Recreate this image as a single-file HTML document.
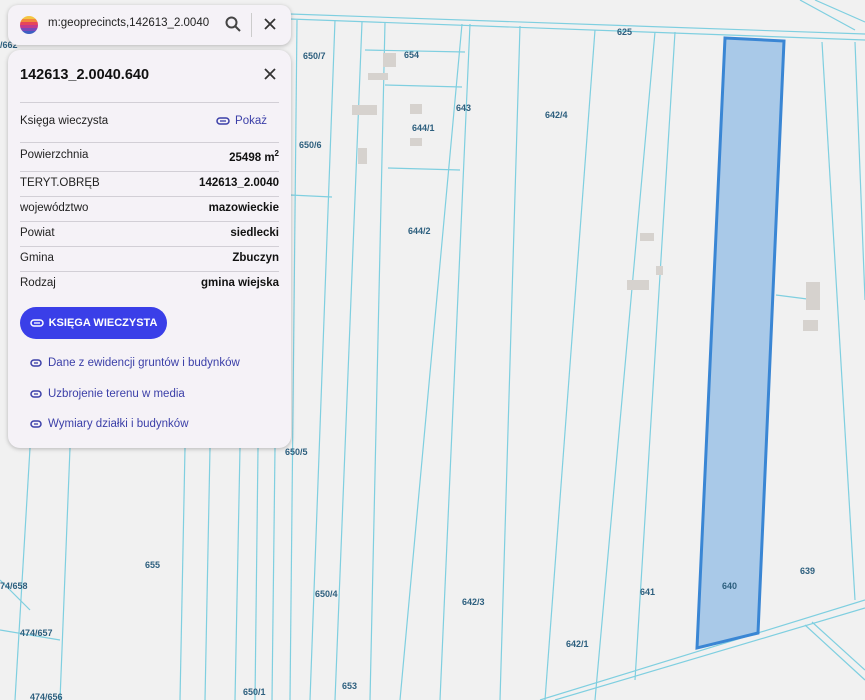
<!DOCTYPE html>
<html><head><meta charset="utf-8"><style>
body{margin:0;width:865px;height:700px;overflow:hidden;background:#f1f1f1;font-family:"Liberation Sans",sans-serif;position:relative}
svg.map{position:absolute;left:0;top:0}
.lbl{font-family:"Liberation Sans",sans-serif;font-size:9px;fill:#2d5f7e;font-weight:bold}
.card{position:absolute;background:#f5f2f7;border-radius:12px;box-shadow:0 1px 4px rgba(0,0,0,.25)}
.row{position:absolute;left:20px;width:259px;display:flex;justify-content:space-between;font-size:11.5px;color:#222}
.row b{color:#111}
.hr{position:absolute;left:20px;width:259px;height:1px;background:#d2cfd6}
.lnk{position:absolute;left:30px;font-size:11.5px;color:#3b3fa8;display:flex;align-items:center;gap:6px}
</style></head><body>
<svg class="map" width="865" height="700">
<g stroke="#7fcfe0" stroke-width="1.2" fill="none">
<line x1="290" y1="14" x2="865" y2="34"/><line x1="290" y1="19" x2="865" y2="40"/>
<line x1="800" y1="0" x2="855" y2="30"/><line x1="815" y1="0" x2="865" y2="22"/>
<line x1="297" y1="20" x2="290" y2="700"/>
<line x1="335" y1="20" x2="310" y2="700"/>
<line x1="362" y1="22" x2="335" y2="700"/>
<line x1="385" y1="22" x2="370" y2="700"/>
<line x1="462" y1="24" x2="400" y2="700"/>
<line x1="470" y1="24" x2="440" y2="700"/>
<line x1="520" y1="26" x2="500" y2="700"/>
<line x1="595" y1="30" x2="545" y2="700"/>
<line x1="655" y1="32" x2="595" y2="700"/>
<line x1="675" y1="32" x2="635" y2="680"/>
<line x1="822" y1="42" x2="855" y2="600"/>
<line x1="855" y1="42" x2="865" y2="300"/>
<line x1="70" y1="448" x2="60" y2="700"/><line x1="30" y1="448" x2="15" y2="700"/>
<line x1="185" y1="448" x2="180" y2="700"/><line x1="210" y1="448" x2="205" y2="700"/>
<line x1="240" y1="448" x2="235" y2="700"/><line x1="258" y1="448" x2="255" y2="700"/>
<line x1="275" y1="448" x2="272" y2="700"/>
<line x1="290" y1="195" x2="332" y2="197"/><line x1="388" y1="168" x2="460" y2="170"/>
<line x1="385" y1="85" x2="462" y2="87"/><line x1="365" y1="50" x2="465" y2="52"/>
<line x1="540" y1="700" x2="865" y2="600"/><line x1="555" y1="700" x2="865" y2="608"/>
<line x1="805" y1="625" x2="865" y2="680"/><line x1="812" y1="622" x2="865" y2="670"/>
<line x1="0" y1="580" x2="30" y2="610"/><line x1="0" y1="630" x2="60" y2="640"/>
<line x1="776" y1="295" x2="815" y2="300"/>
</g>
<g fill="#d6d2ce"><rect x="383" y="53" width="13" height="14"/><rect x="368" y="73" width="20" height="7"/><rect x="352" y="105" width="25" height="10"/><rect x="358" y="148" width="9" height="16"/><rect x="410" y="104" width="12" height="10"/><rect x="410" y="138" width="12" height="8"/><rect x="640" y="233" width="14" height="8"/><rect x="656" y="266" width="7" height="9"/><rect x="627" y="280" width="22" height="10"/><rect x="806" y="282" width="14" height="28"/><rect x="803" y="320" width="15" height="11"/></g>
<polygon points="725,38 784,41 758,633 697,648" fill="#a9c9e8" stroke="#3a86d4" stroke-width="3"/>
<g class="lbl">
<text x="617" y="35">625</text><text x="303" y="59">650/7</text><text x="404" y="58">654</text><text x="456" y="111">643</text><text x="412" y="131">644/1</text><text x="545" y="118">642/4</text><text x="299" y="148">650/6</text><text x="408" y="234">644/2</text><text x="285" y="455">650/5</text><text x="145" y="568">655</text><text x="315" y="597">650/4</text><text x="462" y="605">642/3</text><text x="640" y="595">641</text><text x="722" y="589">640</text><text x="800" y="574">639</text><text x="566" y="647">642/1</text><text x="342" y="689">653</text><text x="243" y="695">650/1</text><text x="0" y="589">74/658</text><text x="20" y="636">474/657</text><text x="30" y="700">474/656</text><text x="0" y="48">/662</text>
</g>
</svg>
<div class="card" style="left:8px;top:5px;width:283px;height:40px;border-radius:10px">
<svg style="position:absolute;left:11px;top:10px" width="20" height="20"><defs><clipPath id="c"><circle cx="10" cy="10" r="9"/></clipPath></defs><g clip-path="url(#c)"><rect y="0" width="20" height="4" fill="#f4c542"/><rect y="4" width="20" height="3" fill="#f08a3c"/><rect y="7" width="20" height="3" fill="#e8455a"/><rect y="10" width="20" height="3" fill="#c03b8f"/><rect y="13" width="20" height="3" fill="#7a4ab8"/><rect y="16" width="20" height="4" fill="#3d5fc2"/></g></svg>
<div style="position:absolute;left:40px;top:12px;font-size:11.5px;color:#222">m:geoprecincts,142613_2.0040</div>
<svg style="position:absolute;left:217px;top:11px" width="16" height="16"><circle cx="6.5" cy="6.5" r="5" stroke="#444" stroke-width="2" fill="none"/><line x1="10" y1="10" x2="15" y2="15" stroke="#444" stroke-width="2"/></svg>
<div style="position:absolute;left:243px;top:8px;width:1px;height:24px;background:#ccc"></div>
<svg style="position:absolute;left:256px;top:13px" width="12" height="12"><path d="M1 1L11 11M11 1L1 11" stroke="#333" stroke-width="1.8"/></svg>
</div>
<div class="card" style="left:8px;top:50px;width:283px;height:398px">
<div style="position:absolute;left:12px;top:17px;font-size:14.5px;font-weight:bold;color:#111">142613_2.0040.640</div>
<svg style="position:absolute;left:256px;top:18px" width="12" height="12"><path d="M1 1L11 11M11 1L1 11" stroke="#333" stroke-width="1.8"/></svg>
</div>
<div class="hr" style="top:102px"></div>
<div class="row" style="top:115px"><span>Księga wieczysta</span><span style="color:#3b3fa8;margin-right:12px;display:flex;align-items:center;gap:5px"><svg width="14" height="8"><rect x="1" y="1" width="12" height="6" rx="3" stroke="#3b3fa8" stroke-width="1.5" fill="none"/><line x1="4" y1="4" x2="10" y2="4" stroke="#3b3fa8" stroke-width="1.3"/></svg>Pokaż</span></div>
<div class="hr" style="top:142px"></div>
<div class="row" style="top:149px"><span>Powierzchnia</span><b>25498 m<sup style="font-size:8px">2</sup></b></div>
<div class="hr" style="top:171px"></div>
<div class="row" style="top:177px"><span>TERYT.OBRĘB</span><b>142613_2.0040</b></div>
<div class="hr" style="top:196px"></div>
<div class="row" style="top:202px"><span>województwo</span><b>mazowieckie</b></div>
<div class="hr" style="top:221px"></div>
<div class="row" style="top:227px"><span>Powiat</span><b>siedlecki</b></div>
<div class="hr" style="top:246px"></div>
<div class="row" style="top:252px"><span>Gmina</span><b>Zbuczyn</b></div>
<div class="hr" style="top:271px"></div>
<div class="row" style="top:277px"><span>Rodzaj</span><b>gmina wiejska</b></div>
<div style="position:absolute;left:20px;top:307px;width:147px;height:32px;border-radius:16px;background:#3a3fe8;color:#fff;font-size:11px;font-weight:bold;display:flex;align-items:center;justify-content:center;gap:5px"><svg width="14" height="8"><rect x="1" y="1" width="12" height="6" rx="3" stroke="#fff" stroke-width="1.5" fill="none"/><line x1="4" y1="4" x2="10" y2="4" stroke="#fff" stroke-width="1.3"/></svg>KSIĘGA WIECZYSTA</div>
<div class="lnk" style="top:357px"><svg width="12" height="8"><rect x="1" y="1" width="10" height="6" rx="3" stroke="#3b3fa8" stroke-width="1.5" fill="none"/><line x1="4" y1="4" x2="8" y2="4" stroke="#3b3fa8" stroke-width="1.3"/></svg>Dane z ewidencji gruntów i budynków</div>
<div class="lnk" style="top:388px"><svg width="12" height="8"><rect x="1" y="1" width="10" height="6" rx="3" stroke="#3b3fa8" stroke-width="1.5" fill="none"/><line x1="4" y1="4" x2="8" y2="4" stroke="#3b3fa8" stroke-width="1.3"/></svg>Uzbrojenie terenu w media</div>
<div class="lnk" style="top:418px"><svg width="12" height="8"><rect x="1" y="1" width="10" height="6" rx="3" stroke="#3b3fa8" stroke-width="1.5" fill="none"/><line x1="4" y1="4" x2="8" y2="4" stroke="#3b3fa8" stroke-width="1.3"/></svg>Wymiary działki i budynków</div>
</body></html>
